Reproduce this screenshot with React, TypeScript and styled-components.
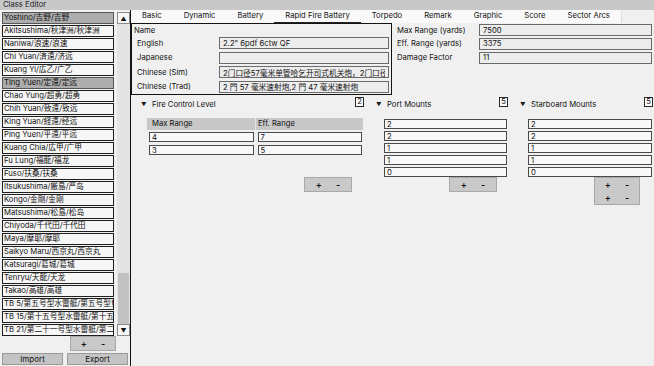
import { FC, Fragment } from "react";
import styled, { createGlobalStyle } from "styled-components";

const GlobalStyle = createGlobalStyle`
    html, body {
        margin: 0;
        padding: 0;
    }
    body {
        font-family: Inter, "Noto Sans CJK SC", sans-serif;
        font-size: 7.7px;
        color: #111;
        background: #f0f0f0;
    }
    * {
        box-sizing: border-box;
    }
`;

const Window = styled.div`
    width: 654px;
    height: 366px;
    display: flex;
    flex-direction: column;
    overflow: hidden;
    background: #f0f0f0;
`;

const TitleBar = styled.div`
    height: 10px;
    line-height: 10px;
    padding-left: 3px;
    background: #c8c8c8;
    color: #222;
    font-size: 7.7px;
`;

const Body = styled.div`
    flex: 1;
    display: flex;
    min-height: 0;
`;

/* ---------- sidebar ---------- */

const Sidebar = styled.div`
    width: 131px;
    flex: 0 0 131px;
    border-right: 1px solid #111;
    display: flex;
    flex-direction: column;
    padding: 2px 0 0 2px;
`;

const ListRow = styled.div`
    height: 324px;
    display: flex;
    gap: 3px;
`;

const ItemList = styled.div`
    width: 113px;
    display: flex;
    flex-direction: column;
    gap: 1px;
    overflow: hidden;
`;

const Item = styled.div<{ $selected?: boolean }>`
    height: 12px;
    flex: 0 0 12px;
    line-height: 10px;
    padding-left: 1px;
    border: 1px solid ${({ $selected }) => ($selected ? "#555" : "#1e1e1e")};
    background: ${({ $selected }) => ($selected ? "#adadad" : "#f6f6f6")};
    white-space: nowrap;
    overflow: hidden;
`;

const Scrollbar = styled.div`
    width: 13px;
    display: flex;
    flex-direction: column;
    background: #e4e4e4;
`;

const ScrollArrow = styled.div`
    height: 12px;
    flex: 0 0 12px;
    border: 1px solid #8a8a8a;
    background: #f7f7f7;
    display: flex;
    align-items: center;
    justify-content: center;
    font-size: 6px;
    color: #111;
`;

const Track = styled.div`
    flex: 1;
    display: flex;
    flex-direction: column;
    justify-content: flex-end;
`;

const Thumb = styled.div`
    height: 51px;
    margin: 0 1px;
    background: #c2c2c2;
`;

const SmallButtonRow = styled.div<{ $pad: number }>`
    display: flex;
    justify-content: flex-end;
    padding-right: ${({ $pad }) => $pad}px;
`;

const PlusMinus = styled.div<{ $width: number }>`
    width: ${({ $width }) => $width}px;
    background: #c9c9c9;
    border: 1px solid #a8a8a8;
    display: flex;
    flex-direction: column;
`;

const PlusMinusLine = styled.div`
    height: 13px;
    display: flex;
    align-items: center;
    justify-content: center;
    gap: 14px;
    font-size: 9px;
    font-weight: 600;
    color: #111;
`;

const FooterRow = styled.div`
    display: flex;
    gap: 4px;
    margin-top: 2px;
`;

const FooterButton = styled.div`
    width: 61px;
    height: 12px;
    line-height: 10px;
    text-align: center;
    background: #c4c4c4;
    border: 1px solid #9a9a9a;
    font-size: 8px;
`;

/* ---------- main ---------- */

const Main = styled.div`
    flex: 1;
    display: flex;
    flex-direction: column;
    min-width: 0;
`;

const TabBar = styled.div`
    align-self: flex-start;
    display: flex;
    height: 13px;
    background: #f9f9f9;
    border-right: 1px solid #dedede;
`;

const Tab = styled.div<{ $active?: boolean }>`
    padding: 0 11px;
    line-height: 12px;
    white-space: nowrap;
    border-bottom: 1px solid ${({ $active }) => ($active ? "#222" : "transparent")};
`;

const TopSection = styled.div`
    display: flex;
    height: 72px;
`;

const NameGroup = styled.div`
    width: 261px;
    border: 1px solid #141414;
    padding: 2px 2px 0 2px;
`;

const GroupTitle = styled.div`
    line-height: 10px;
    height: 10px;
    margin-bottom: 1px;
`;

const FieldGrid = styled.div<{ $gap: number }>`
    display: grid;
    grid-template-columns: 82px 1fr;
    grid-auto-rows: 12px;
    row-gap: ${({ $gap }) => $gap}px;
    align-items: center;
`;

const FieldLabel = styled.div`
    white-space: nowrap;
`;

const TextBox = styled.input`
    width: 100%;
    height: 12px;
    margin: 0;
    padding: 0 3px;
    border: 1px solid #6a6a6a;
    background: #ededed;
    font-family: Inter, "Noto Sans CJK SC", sans-serif;
    font-size: 7.7px;
    color: #111;
    outline: none;
`;

const NameFields = styled(FieldGrid)`
    padding-left: 3px;
`;

const RangeFields = styled(FieldGrid)`
    flex: 1;
    align-self: flex-start;
    padding: 1px 2px 0 5px;
`;

const BottomSection = styled.div`
    display: grid;
    grid-template-columns: 227px 136px 137px;
    column-gap: 8px;
    padding: 2px 1px 0 6px;
`;

const Panel = styled.div`
    display: flex;
    flex-direction: column;
`;

const PanelHeader = styled.div`
    height: 21px;
    display: flex;
    justify-content: space-between;
    align-items: flex-start;
    padding-left: 4px;
`;

const PanelTitle = styled.div`
    display: flex;
    align-items: center;
    gap: 5px;
    margin-top: 3px;
    line-height: 10px;
`;

const Caret = styled.span`
    font-size: 5.5px;
    width: 6px;
    color: #1a1a1a;
`;

const CountBox = styled.div`
    width: 9px;
    height: 10px;
    line-height: 8px;
    text-align: center;
    border: 1px solid #2a2a2a;
    background: #fbfbfb;
`;

const PanelBody = styled.div<{ $indent: number }>`
    height: 59px;
    padding: 0 1px 0 ${({ $indent }) => $indent}px;
`;

const TableHead = styled.div`
    display: grid;
    grid-template-columns: 108px 1fr;
    height: 12px;
    line-height: 12px;
    background: #c8c8c8;
`;

const HeadCell = styled.div<{ $pad: number; $divider?: boolean }>`
    padding-left: ${({ $pad }) => $pad}px;
    border-left: ${({ $divider }) => ($divider ? "1px solid #e6e6e6" : "none")};
`;

const TableRows = styled.div`
    display: flex;
    flex-direction: column;
    gap: 3px;
    margin-top: 2px;
`;

const TableRow = styled.div`
    display: grid;
    grid-template-columns: 1fr 1fr;
    column-gap: 4px;
    padding: 0 1px 0 2px;
`;

const Cell = styled(TextBox)`
    height: 10px;
    padding: 0 2px;
    border-color: #4a4a4a;
    background: #f8f8f8;
    line-height: 8px;
`;

const MountList = styled.div`
    display: flex;
    flex-direction: column;
    gap: 2px;
    margin-top: 1px;
`;

const names: [string, boolean?][] = [
    ["Yoshino/吉野/吉野", true],
    ["Akitsushima/秋津洲/秋津洲"],
    ["Naniwa/浪速/浪速"],
    ["Chi Yuan/済遠/济远"],
    ["Kuang Yi/広乙/广乙"],
    ["Ting Yuen/定遠/定远", true],
    ["Chao Yung/超勇/超勇"],
    ["Chih Yuan/致遠/致远"],
    ["King Yuan/経遠/经远"],
    ["Ping Yuen/平遠/平远"],
    ["Kuang Chia/広甲/广甲"],
    ["Fu Lung/福龍/福龙"],
    ["Fuso/扶桑/扶桑"],
    ["Itsukushima/厳島/严岛"],
    ["Kongo/金剛/金刚"],
    ["Matsushima/松島/松岛"],
    ["Chiyoda/千代田/千代田"],
    ["Maya/摩耶/摩耶"],
    ["Saikyo Maru/西京丸/西京丸"],
    ["Katsuragi/葛城/葛城"],
    ["Tenryu/天龍/天龙"],
    ["Takao/高雄/高雄"],
    ["TB 5/第五号型水雷艇/第五号型鱼雷艇"],
    ["TB 15/第十五号型水雷艇/第十五号型鱼雷艇"],
    ["TB 21/第二十一号型水雷艇/第二十一号型鱼雷艇"],
];

const tabs = ["Basic", "Dynamic", "Battery", "Rapid Fire Battery", "Torpedo", "Remark", "Graphic", "Score", "Sector Arcs"];

const nameFields: [string, string][] = [
    ["English", '2.2" 6pdf 6ctw QF'],
    ["Japanese", ""],
    ["Chinese (Sim)", "2门口径57毫米单管哈乞开司式机关炮，2门口径47毫米单管哈乞开司式机关炮"],
    ["Chinese (Trad)", "2 門 57 毫米速射炮,2 門 47 毫米速射炮"],
];

const rangeFields: [string, string][] = [
    ["Max Range (yards)", "7500"],
    ["Eff. Range (yards)", "3375"],
    ["Damage Factor", "11"],
];

const mounts = ["2", "2", "1", "1", "0"];

const Buttons: FC<{ rows?: number; width: number; pad: number }> = ({ rows = 1, width, pad }) => (
    <SmallButtonRow $pad={pad}>
        <PlusMinus $width={width}>
            {Array.from({ length: rows }).map((_, i) => (
                <PlusMinusLine key={i}>
                    <span>+</span>
                    <span>-</span>
                </PlusMinusLine>
            ))}
        </PlusMinus>
    </SmallButtonRow>
);

const MountPanel: FC<{ title: string }> = ({ title }) => (
    <>
        <PanelHeader>
            <PanelTitle>
                <Caret>▼</Caret>
                <span>{title}</span>
            </PanelTitle>
            <CountBox>{mounts.length}</CountBox>
        </PanelHeader>
        <PanelBody $indent={12}>
            <MountList>
                {mounts.map((m, i) => (
                    <Cell key={i} readOnly value={m} />
                ))}
            </MountList>
        </PanelBody>
    </>
);

const App: FC = () => {
    return (
        <Window>
            <GlobalStyle />
            <TitleBar>Class Editor</TitleBar>
            <Body>
                <Sidebar>
                    <ListRow>
                        <ItemList>
                            {names.map(([n, sel]) => (
                                <Item key={n} $selected={sel}>{n}</Item>
                            ))}
                        </ItemList>
                        <Scrollbar>
                            <ScrollArrow>▲</ScrollArrow>
                            <Track>
                                <Thumb />
                            </Track>
                            <ScrollArrow>▼</ScrollArrow>
                        </Scrollbar>
                    </ListRow>
                    <Buttons width={46} pad={14} />
                    <FooterRow>
                        <FooterButton>Import</FooterButton>
                        <FooterButton>Export</FooterButton>
                    </FooterRow>
                </Sidebar>
                <Main>
                    <TabBar>
                        {tabs.map((t) => (
                            <Tab key={t} $active={t === "Rapid Fire Battery"}>{t}</Tab>
                        ))}
                    </TabBar>
                    <TopSection>
                        <NameGroup>
                            <GroupTitle>Name</GroupTitle>
                            <NameFields $gap={2.6}>
                                {nameFields.map(([label, value]) => (
                                    <Fragment key={label}>
                                        <FieldLabel>{label}</FieldLabel>
                                        <TextBox readOnly value={value} />
                                    </Fragment>
                                ))}
                            </NameFields>
                        </NameGroup>
                        <RangeFields $gap={1.8}>
                            {rangeFields.map(([label, value]) => (
                                <Fragment key={label}>
                                    <FieldLabel>{label}</FieldLabel>
                                    <TextBox readOnly value={value} />
                                </Fragment>
                            ))}
                        </RangeFields>
                    </TopSection>
                    <BottomSection>
                        <Panel>
                            <PanelHeader>
                                <PanelTitle>
                                    <Caret>▼</Caret>
                                    <span>Fire Control Level</span>
                                </PanelTitle>
                                <CountBox>2</CountBox>
                            </PanelHeader>
                            <PanelBody $indent={10}>
                                <TableHead>
                                    <HeadCell $pad={5}>Max Range</HeadCell>
                                    <HeadCell $pad={2} $divider>Eff. Range</HeadCell>
                                </TableHead>
                                <TableRows>
                                    <TableRow>
                                        <Cell readOnly value="4" />
                                        <Cell readOnly value="7" />
                                    </TableRow>
                                    <TableRow>
                                        <Cell readOnly value="3" />
                                        <Cell readOnly value="5" />
                                    </TableRow>
                                </TableRows>
                            </PanelBody>
                            <Buttons width={48} pad={12} />
                        </Panel>
                        <Panel>
                            <MountPanel title="Port Mounts" />
                            <Buttons width={48} pad={11} />
                        </Panel>
                        <Panel>
                            <MountPanel title="Starboard Mounts" />
                            <Buttons width={46} pad={13} rows={2} />
                        </Panel>
                    </BottomSection>
                </Main>
            </Body>
        </Window>
    );
};

export default App;
